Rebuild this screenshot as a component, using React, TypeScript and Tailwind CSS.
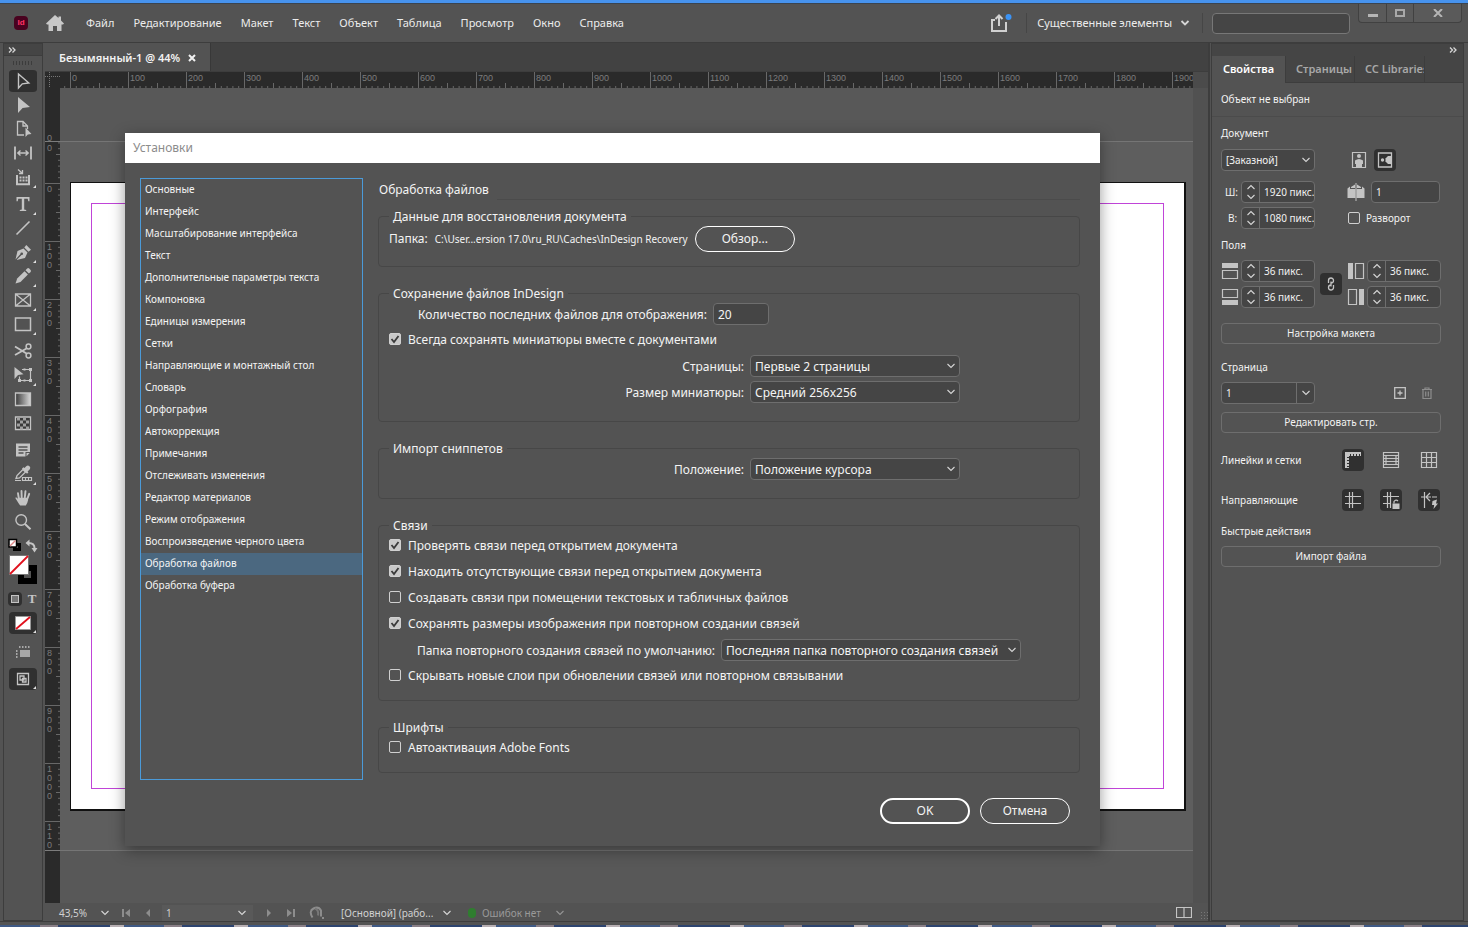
import React from "react";

type IconProps = { children: React.ReactNode; size?: string; box?: string };

function Icon({ children, size = "size-5", box = "0 0 20 20" }: IconProps) {
  return (
    <svg viewBox={box} className={`${size} shrink-0`} fill="none" stroke="#c4c4c4" strokeWidth="1.5" aria-hidden="true">
      {children}
    </svg>
  );
}

function Chevron({ className = "", weight = 1.1 }: { className?: string; weight?: number }) {
  return (
    <svg viewBox="0 0 10 6" className={`h-[6px] w-[10px] shrink-0 ${className}`} fill="none" stroke="#d6d6d6" strokeWidth={weight} aria-hidden="true">
      <path d="M1.500 1L5 4.500 8.500 1" />
    </svg>
  );
}

const F = "#c4c4c4";

const toolGroups: { name: string; more?: boolean; icon: React.ReactNode }[][] = [
  [
    { name: "Выделение", icon: <path d="M5.500 3v14l3.800-4.200 6.500-.8z" strokeWidth="1.400" /> },
    { name: "Прямое выделение", icon: <path d="M5 2v16l4.600-5 7.400-1z" fill={F} stroke="none" /> },
    {
      name: "Страница",
      icon: (
        <>
          <path d="M11 16H4.500V2.500H10l4.500 4.500V10M10 2.500V7h4.500" strokeWidth="1.300" />
          <path d="M12.500 8.500v9.500l2.300-2.500 3.700-.5z" fill={F} stroke="none" />
        </>
      ),
    },
    {
      name: "Зазор",
      icon: (
        <>
          <path d="M2 3.500v13M18 3.500v13" strokeWidth="1.800" />
          <path d="M5 10h10M7.500 7.500L4.800 10l2.700 2.500M12.500 7.500l2.700 2.500-2.700 2.500" strokeWidth="1.400" />
        </>
      ),
    },
    {
      name: "Размещение содержимого",
      more: true,
      icon: (
        <>
          <path d="M4 8v9.200h12V8" strokeWidth="2" />
          <path d="M5 2.500l4 3.500M9.500 3v3.500H6" strokeWidth="1.300" />
          <path d="M6.500 10.500h8M6.500 13.500h8" strokeWidth="2" strokeDasharray="2 1" />
        </>
      ),
    },
  ],
  [
    { name: "Текст", more: true, icon: <path d="M3.500 3h13v4.200h-1.200l-.6-2.400h-3.500v10.700l2 .4V17H6.800v-1.100l2-.4V4.800H5.300l-.6 2.400H3.500z" fill={F} stroke="none" /> },
    { name: "Линия", icon: <path d="M3.500 16.500l13-13" strokeWidth="1.600" /> },
    {
      name: "Перо",
      more: true,
      icon: (
        <>
          <path d="M2.500 17.500l2-8.500 6-2.500 4 4L12 16l-8.500 2 5-5a1.300 1.300 0 1 0-1-1z" fill={F} stroke="none" />
          <path d="M11.300 5.500l2-2.500 4.700 4.700-2.500 2z" fill={F} stroke="none" />
        </>
      ),
    },
    {
      name: "Карандаш",
      more: true,
      icon: (
        <>
          <path d="M2.500 17.500l1.700-5 7.300-7.300 3.400 3.400-7.400 7.300z" fill={F} stroke="none" />
          <path d="M12.500 4.200l1.700-1.700q1-.8 2 0l1.400 1.400q.8 1 0 2l-1.700 1.700z" fill={F} stroke="none" />
        </>
      ),
    },
    { name: "Прямоугольный фрейм", more: true, icon: <path d="M2.500 4h15v12h-15zM2.500 4l15 12M17.500 4l-15 12" strokeWidth="1.300" /> },
    { name: "Прямоугольник", more: true, icon: <path d="M2.500 4h15v12.500h-15z" strokeWidth="1.500" /> },
  ],
  [
    {
      name: "Ножницы",
      icon: (
        <>
          <path d="M2 5.500l11.500 7M2 14l11.500-6.500" strokeWidth="1.900" />
          <circle cx="15.500" cy="5.500" r="2.400" strokeWidth="1.500" />
          <circle cx="15.500" cy="14.500" r="2.400" strokeWidth="1.500" />
        </>
      ),
    },
    {
      name: "Свободное трансформирование",
      more: true,
      icon: (
        <>
          <path d="M9 4.500h8.500v11h-11v-4" strokeWidth="1.200" />
          <path d="M16 3h3v3h-3zM16 14h3v3h-3zM5 14h3v3H5zM10.500 3.500h2v2h-2zM10.500 14.500h2v2h-2z" fill={F} stroke="none" />
          <path d="M1.500 2v12l3.500-4 5.500-.8z" fill={F} stroke="none" />
        </>
      ),
    },
    {
      name: "Градиент",
      icon: (
        <>
          <defs>
            <linearGradient id="tool-gradient">
              <stop offset="0" stopColor="#3a3a3a" />
              <stop offset="1" stopColor="#d8d8d8" />
            </linearGradient>
          </defs>
          <path d="M2.500 4h15v12.500h-15z" fill="url(#tool-gradient)" strokeWidth="1.300" />
        </>
      ),
    },
    {
      name: "Растушевка градиента",
      icon: (
        <>
          <path d="M2.500 4h15v12.500h-15z" fill="#3a3a3a" strokeWidth="1.300" />
          <path d="M4 6h12M4 12h12" stroke="#a0a0a0" strokeWidth="3" strokeDasharray="3 3" />
          <path d="M7 9h9M7 15h9" stroke="#a0a0a0" strokeWidth="3" strokeDasharray="3 3" />
        </>
      ),
    },
  ],
  [
    {
      name: "Примечание",
      icon: (
        <>
          <path d="M3 3.500h14V12h-4.500v4.500H3z" fill={F} stroke="none" />
          <path d="M13.500 13h3.200l-3.200 3.200z" fill={F} stroke="none" />
          <path d="M5.500 7h9M5.500 10h9M5.500 13h5" stroke="#535353" strokeWidth="1.300" />
        </>
      ),
    },
    {
      name: "Пипетка",
      more: true,
      icon: (
        <>
          <path d="M3 14.500l1-3 6-6 2.500 2.500-6 6z" strokeWidth="1.300" />
          <path d="M9 4.500l1.500-1.200 1 .8L13.500 2q1.500-1.200 3 .3t.3 3l-2.200 2.200.8 1-1.400 1.300z" fill={F} stroke="none" />
          <path d="M2 16.500h6M9.500 13.500h9v3h-9zM12.500 13v3.500M15.500 13v3.500" strokeWidth="1.200" />
        </>
      ),
    },
    {
      name: "Рука",
      icon: (
        <>
          <path d="M6 11.500L5 5.300M8.700 9.500L8.500 3M11.800 9.500l.7-6.300M14.300 11l1.900-5.200" strokeWidth="1.900" strokeLinecap="round" />
          <path d="M2.200 9.800q1.400-.8 2.400.6l1.200 1.300.3-2h8.800l.2 2.300q-.6 3.300-2.300 5.500H7.200q-1.700-2-5-7.700z" fill={F} stroke="none" />
        </>
      ),
    },
    {
      name: "Масштаб",
      icon: (
        <>
          <circle cx="8.200" cy="8" r="5.300" strokeWidth="1.400" />
          <path d="M12 12l5.500 5.200" strokeWidth="2" />
        </>
      ),
    },
  ],
];

function Corner() {
  return <span className="absolute right-px bottom-px border-b-[3px] border-l-[3px] border-b-[#e0e0e0] border-l-transparent" />;
}

function Toolbar() {
  return (
    <aside className="flex w-10 shrink-0 flex-col border border-[#3d3d3d]">
      <div className="flex h-3 items-center border-b border-[#3d3d3d] bg-[#454545] pl-1">
        <DoubleArrow />
      </div>
      <div className="flex h-[13px] items-center justify-center">
        <div className="h-1 w-5 bg-[repeating-linear-gradient(90deg,#3c3c3c_0_1px,#535353_1px_3px)]" />
      </div>
      <div className="flex flex-col items-center gap-[3px]">
        {toolGroups.map((group, g) => (
          <div key={g} className="flex flex-col">
            {group.map((tool, i) => (
              <button
                key={tool.name}
                aria-label={tool.name}
                className={`relative flex h-6 w-7 items-center justify-center rounded-sm ${g === 0 && i === 0 ? "bg-[#303030] bg-clip-content py-px" : ""}`}
              >
                <Icon>{tool.icon}</Icon>
                {tool.more && <Corner />}
              </button>
            ))}
          </div>
        ))}
      </div>
      <div className="flex flex-col items-center">
        <div className="mt-0.5 flex h-[19px] w-8 items-center justify-between">
          <Icon size="size-4" box="0 0 16 16">
            <path d="M7.500 6.500h5v5h-5z" stroke="#000" strokeWidth="3" />
            <path d="M2 1.500h7.500V9H2z" fill="#fff" stroke="#000" />
            <path d="M3 8l5.500-5.500" stroke="#d88" />
          </Icon>
          <Icon size="size-4" box="0 0 16 16">
            <path d="M5.500 5q6 0 6 5" strokeWidth="2" />
            <path d="M2.500 5L6.500 1.500v7zM8.500 10h6l-3 4.500z" fill={F} stroke="none" />
          </Icon>
        </div>
        <button aria-label="Заливка и обводка" className="size-[30px]">
          <svg viewBox="0 0 30 30" className="size-[30px]" aria-hidden="true">
            <path d="M13 13h13v13H13z" fill="none" stroke="#000" strokeWidth="6" />
            <path d="M1.500.5h19v19h-19z" fill="#fff" stroke="#777" />
            <path d="M2 19L20 1" stroke="#e0101c" strokeWidth="1.800" />
          </svg>
        </button>
        <div className="mt-1 flex h-5 items-center gap-1">
          <button aria-label="Форматирование контейнера" className="flex h-3.5 w-3.5 items-center justify-center rounded-sm bg-[#303030]">
            <span className="size-2 border border-[#c4c4c4] bg-[#777]" />
          </button>
          <button className="w-3 font-['Liberation_Serif',serif] text-[13px] leading-4 font-bold text-[#c4c4c4]">T</button>
        </div>
        <button aria-label="Применить «Нет»" className="relative mt-[3px] flex h-[22px] w-7 items-center justify-center rounded-sm bg-[#303030]">
          <svg viewBox="0 0 16 14" className="h-[14px] w-4" aria-hidden="true">
            <path d="M.5.5h15v13H.5z" fill="#fff" stroke="#999" />
            <path d="M1 13L15 1" stroke="#e0101c" strokeWidth="1.800" />
          </svg>
          <Corner />
        </button>
        <button aria-label="Панель" className="mt-2 flex h-5 w-7 items-center justify-center">
          <Icon size="size-4" box="0 0 16 16">
            <path d="M5 6h10v7H5z" fill="#a8a8a8" stroke="none" />
            <path d="M4 3h12M1 7h3M1 10h3M1 13h3" stroke="#a8a8a8" strokeWidth="2" strokeDasharray="1.500 1.500" />
          </Icon>
        </button>
        <button aria-label="Режим экрана" className="relative mt-1.5 flex h-[22px] w-7 items-center justify-center rounded-sm bg-[#303030]">
          <Icon size="size-3.5" box="0 0 14 14">
            <path d="M1.500 1.500h11v11h-11zM4 4h4v4H4zM6.500 6.500H10V10H6.500z" strokeWidth="1.300" />
          </Icon>
          <Corner />
        </button>
      </div>
    </aside>
  );
}

function DoubleArrow() {
  return (
    <svg viewBox="0 0 8 6" className="h-[6px] w-2" fill="none" stroke="#d6d6d6" strokeWidth="1.300" aria-hidden="true">
      <path d="M1 .5L3.500 3 1 5.500M4.500.5L7 3 4.500 5.500" />
    </svg>
  );
}

const STEP = 58;

function TopRuler() {
  const marks = Array.from({ length: 20 }, (_, i) => i);
  const ticks = Array.from({ length: 195 }, (_, i) => i - 1);
  return (
    <svg className="h-4 min-w-0 flex-1 bg-[#2a2a2a] font-['Liberation_Sans',sans-serif]" aria-hidden="true">
      {ticks.map((t) => (
        <line key={t} x1={10.5 + t * 5.8} x2={10.5 + t * 5.8} y1={t % 10 === 0 ? 0 : t % 5 === 0 ? 11 : 14} y2="16" stroke="#686868" />
      ))}
      {marks.map((m) => (
        <text key={m} x={12 + m * STEP} y="9" fontSize="9" fill="#7c7c7c">
          {m * 100}
        </text>
      ))}
    </svg>
  );
}

function SideRuler() {
  const marks = Array.from({ length: 12 }, (_, i) => i);
  const ticks = Array.from({ length: 123 }, (_, i) => i - 7);
  return (
    <svg className="w-[15px] shrink-0 self-stretch bg-[#2a2a2a] font-['Liberation_Sans',sans-serif]" aria-hidden="true">
      {ticks
        .filter((t) => t < 116)
        .map((t) => (
          <line key={t} y1={95.5 + t * 5.8} y2={95.5 + t * 5.8} x1={t % 10 === 0 ? 0 : t % 5 === 0 ? 11 : 13} x2="15" stroke="#686868" />
        ))}
      <path d="M0 53.500h15M0 762.500h15" stroke="#7c7c7c" />
      <text x="2" y="53" fontSize="9" fill="#7c7c7c">0</text>
      <text x="2" y="63" fontSize="9" fill="#7c7c7c">0</text>
      {marks.map((m) =>
        String(m * 100).slice(0, m === 11 ? 3 : 4).split("").map((digit, i) => (
          <text key={`${m}-${i}`} x="2" y={104 + m * STEP + i * 9} fontSize="9" fill="#7c7c7c">
            {digit}
          </text>
        ))
      )}
    </svg>
  );
}

function DocumentArea() {
  return (
    <main className="flex min-w-0 flex-1 flex-col border-r-2 border-[#3d3d3d]">
      <div className="flex h-[29px] border-b border-[#3d3d3d] bg-[#424242]">
        <div className="flex items-center gap-2 border-r border-[#383838] bg-[#535353] px-3.5 pt-0.5 text-[11px] font-semibold text-[#f2f2f2]">
          <span>Безымянный-1 @ 44%</span>
          <button aria-label="Закрыть вкладку">
            <svg viewBox="0 0 8 8" className="size-2" stroke="#f2f2f2" strokeWidth="2" aria-hidden="true">
              <path d="M1 1l6 6M7 1L1 7" />
            </svg>
          </button>
        </div>
      </div>
      <div className="flex">
        <svg viewBox="0 0 15 16" className="h-4 w-[15px] bg-[#2a2a2a]" stroke="#777" strokeDasharray="1 1" aria-hidden="true">
          <path d="M4.500 0v16M0 4.500h15" />
        </svg>
        <TopRuler />
        <div className="w-[15px] bg-[#4b4b4b]" />
      </div>
      <div className="flex flex-1">
        <SideRuler />
        <div className="flex min-w-0 flex-1 flex-col bg-[#585858] pt-[53px]">
          <div className="flex h-[710px] border-y border-[#757575] bg-[#5e5e5e] pt-10 pr-[7px] pb-[39px] pl-[10px]">
            <div className="flex-1 border border-r-2 border-b-2 border-[#111] bg-white p-5">
              <div className="h-full border border-[#c044d8]" />
            </div>
          </div>
        </div>
        <div className="w-[15px] bg-[#515151]" />
      </div>
      <footer className="flex h-[18px] items-center pt-0.5 text-[10px] whitespace-nowrap text-[#d0d0d0]">
        <span className="w-[55px] pl-3.5">43,5%</span>
        <Chevron />
        <div className="ml-3 flex items-center gap-3.5">
          <button aria-label="Первая страница">
            <Icon size="size-2" box="0 0 8 8"><path d="M1 0v8" stroke="#a0a0a0" /><path d="M8 0v8L3 4z" fill="#8d8d8d" stroke="none" /></Icon>
          </button>
          <button aria-label="Предыдущая страница">
            <Icon size="size-2" box="0 0 8 8"><path d="M6 0v8L2 4z" fill="#8d8d8d" stroke="none" /></Icon>
          </button>
        </div>
        <div className="ml-2.5 flex h-4 w-[91px] items-center bg-[#595959] pr-1.5">
          <input aria-label="Номер страницы" defaultValue="1" className="w-full min-w-0 bg-transparent pl-1 outline-none" />
          <Chevron />
        </div>
        <div className="ml-3 flex items-center gap-3.5">
          <button aria-label="Следующая страница">
            <Icon size="size-2" box="0 0 8 8"><path d="M2 0v8l4-4z" fill="#8d8d8d" stroke="none" /></Icon>
          </button>
          <button aria-label="Последняя страница">
            <Icon size="size-2" box="0 0 8 8"><path d="M0 0v8l5-4z" fill="#8d8d8d" stroke="none" /><path d="M7 0v8" stroke="#a0a0a0" /></Icon>
          </button>
        </div>
        <button aria-label="Открыть" className="ml-3.5">
          <Icon size="size-4" box="0 0 16 16">
            <path d="M3.500 12.500Q-.5 6 4.500 3.500T12 5.500v6" stroke="#8d8d8d" strokeWidth="2" />
            <path d="M6 3.500q4 1.500 3 7" stroke="#777" strokeWidth="2" />
            <path d="M13 12h2v2h-2z" fill="#8d8d8d" stroke="none" />
          </Icon>
        </button>
        <span className="ml-4 w-[101px]">[Основной] (рабо...</span>
        <Chevron />
        <span className="ml-4 h-[10px] w-2 rounded-full bg-[#2f7d2f]" />
        <span className="ml-1.5 w-[73px] text-[#999]">Ошибок нет</span>
        <Chevron className="opacity-50" />
        <div className="ml-auto flex items-center gap-2">
          <button aria-label="Разделить окно">
            <Icon size="h-3 w-4" box="0 0 16 12"><path d="M.5.500h15v10H.5zM8 .500v10" strokeWidth="1.200" /></Icon>
          </button>
          <div className="size-2 self-end bg-[radial-gradient(#777_1px,transparent_1px)] bg-[size:3px_3px]" />
        </div>
      </footer>
    </main>
  );
}

function Spinner({ id, value, label }: { id: string; value: string; label?: string }) {
  return (
    <div className="flex h-[22px] w-[74px] overflow-hidden rounded-sm border border-[#6e6e6e] bg-[#454545]">
      <div className="flex w-[18px] shrink-0 flex-col items-center justify-center gap-1 border-r border-[#6e6e6e]">
        <button aria-label="Увеличить" className="flex"><Chevron className="rotate-180" /></button>
        <button aria-label="Уменьшить" className="flex"><Chevron /></button>
      </div>
      <input id={id} aria-label={label} defaultValue={value} className="w-full min-w-0 bg-transparent pl-1 outline-none" />
    </div>
  );
}

function MarginIcon({ side }: { side: "top" | "bottom" | "left" | "right" }) {
  const shapes = {
    top: "M1 1h16v5H1z",
    bottom: "M1 12h16v5H1z",
    left: "M1 1h5v16H1z",
    right: "M12 1h5v16h-5z",
  };
  const frames = {
    top: "M1.500 8.500h15v8h-15z",
    bottom: "M1.500 1.500h15v8h-15z",
    left: "M8.500 1.500h8v15h-8z",
    right: "M1.500 1.500h8v15h-8z",
  };
  return (
    <Icon size="size-[18px]" box="0 0 18 18">
      <path d={shapes[side]} fill={F} stroke="none" />
      <path d={frames[side]} strokeWidth="1.200" />
    </Icon>
  );
}

function PanelButton({ children }: { children: React.ReactNode }) {
  return (
    <button className="flex h-[21px] w-full items-center justify-center rounded-sm border border-[#6e6e6e]">
      {children}
    </button>
  );
}

function Toggle({ name, on = false, children }: { name: string; on?: boolean; children: React.ReactNode }) {
  return (
    <button aria-label={name} className={`flex size-[22px] items-center justify-center rounded-sm ${on ? "bg-[#303030]" : ""}`}>
      <Icon size="size-[18px]" box="0 0 18 18">{children}</Icon>
    </button>
  );
}

function PropertiesPanel() {
  return (
    <aside className="mr-1 ml-px flex w-[253px] shrink-0 flex-col border border-[#3d3d3d] text-[10px] text-[#f2f2f2]">
      <div className="flex h-3 items-center justify-end bg-[#454545] pr-1.5">
        <DoubleArrow />
      </div>
      <div className="flex h-[27px] border-b border-[#3d3d3d] bg-[#454545] text-[11px] font-semibold text-[#a8a8a8]">
        <button className="-mb-px w-[73px] bg-[#535353] text-white">Свойства</button>
        <button className="w-[70px] border-x border-[#3d3d3d] pl-2">Страницы</button>
        <button className="w-[70px] overflow-hidden border-r border-[#3d3d3d] pl-[10px] text-left whitespace-nowrap">CC Libraries</button>
      </div>
      <div className="flex h-[34px] items-center border-b border-[#4b4b4b] pl-[9px]">Объект не выбран</div>
      <div className="flex w-[238px] flex-col px-[9px]">
        <h3 className="mt-2 flex h-4 items-center">Документ</h3>
        <div className="mt-2 flex h-[22px] items-center">
          <div className="relative">
            <select aria-label="Формат документа" className="h-[22px] w-[94px] appearance-none rounded-sm border border-[#6e6e6e] bg-[#454545] pl-1">
              <option>[Заказной]</option>
            </select>
            <Chevron className="pointer-events-none absolute top-2 right-1" />
          </div>
          <div className="ml-[33px] flex items-center gap-1">
            <Toggle name="Книжная">
              <path d="M2.500 1.500h13v15h-13z" strokeWidth="1.200" />
              <circle cx="9" cy="5" r="2" fill={F} stroke="none" />
              <path d="M5 9.500Q9 6.500 13 9.500V13h-1v3H6v-3H5z" fill={F} stroke="none" />
            </Toggle>
            <Toggle name="Альбомная" on>
              <path d="M2.500 2h13v14h-13z" strokeWidth="1.300" />
              <circle cx="6.500" cy="9" r="1.700" fill={F} stroke="none" />
              <path d="M15 5h-3l-2.500 2.500v3L12 13h3z" fill={F} stroke="none" />
            </Toggle>
          </div>
        </div>
        <div className="mt-[10px] flex h-[22px] items-center">
          <label htmlFor="doc-w" className="w-5 pl-1">Ш:</label>
          <Spinner id="doc-w" value="1920 пикс." />
          <label htmlFor="doc-pages" className="ml-8 w-6" aria-label="Страницы">
            <Icon size="size-[18px]" box="0 0 18 18">
              <path d="M.5 15V5.500l2.500-2V6l5.500 0v9zM9.500 15V6H15V3.500l2.500 2V15zM4 4l4-2.500V5H4zM10 1.500L14 4v1h-4z" fill={F} stroke="none" />
              <path d="M9 0v18" strokeWidth="1" />
            </Icon>
          </label>
          <input id="doc-pages" defaultValue="1" className="h-[22px] w-[69px] rounded-sm border border-[#6e6e6e] bg-[#454545] px-1 outline-none" />
        </div>
        <div className="mt-1 flex h-[22px] items-center">
          <label htmlFor="doc-h" className="w-5 pl-[7px]">В:</label>
          <Spinner id="doc-h" value="1080 пикс." />
          <input id="spread" type="checkbox" className="ml-[33px] size-3 appearance-none rounded-[2px] border border-[#d0d0d0]" />
          <label htmlFor="spread" className="ml-1.5">Разворот</label>
        </div>
        <h3 className="mt-2 flex h-4 items-center">Поля</h3>
        <div className="mt-[7px] flex items-center">
          <div className="flex flex-col gap-1">
            <div className="flex items-center gap-0.5"><MarginIcon side="top" /><Spinner id="m-top" label="Сверху" value="36 пикс." /></div>
            <div className="flex items-center gap-0.5"><MarginIcon side="bottom" /><Spinner id="m-bottom" label="Снизу" value="36 пикс." /></div>
          </div>
          <button aria-label="Связать поля" className="mx-[5px] flex size-[22px] items-center justify-center rounded-sm bg-[#303030]">
            <Icon size="size-4" box="0 0 16 16">
              <path d="M5.500 7V4.500a2.500 2.500 0 0 1 5 0Q10.500 7 8 7M10.500 9v2.500a2.500 2.500 0 0 1-5 0Q5.500 9 8 9M8 5.500v5" strokeWidth="1.300" />
            </Icon>
          </button>
          <div className="flex flex-col gap-1">
            <div className="flex items-center gap-0.5"><MarginIcon side="left" /><Spinner id="m-left" label="Слева" value="36 пикс." /></div>
            <div className="flex items-center gap-0.5"><MarginIcon side="right" /><Spinner id="m-right" label="Справа" value="36 пикс." /></div>
          </div>
        </div>
        <div className="mt-[15px]"><PanelButton>Настройка макета</PanelButton></div>
        <h3 className="mt-[15px] flex h-4 items-center">Страница</h3>
        <div className="mt-[7px] flex h-[22px] items-center">
          <div className="flex h-[22px] w-[94px] overflow-hidden rounded-sm border border-[#6e6e6e] bg-[#454545]">
            <input aria-label="Страница" defaultValue="1" className="w-full min-w-0 bg-transparent pl-1 outline-none" />
            <button aria-label="Выбрать страницу" className="flex w-[18px] shrink-0 items-center justify-center border-l border-[#6e6e6e]"><Chevron /></button>
          </div>
          <div className="ml-auto flex items-center gap-[15px] pr-2">
            <button aria-label="Создать страницу">
              <Icon size="size-3" box="0 0 12 12"><path d="M.7.7h10.600v10.600H.7zM6 3.500v5M3.500 6h5" strokeWidth="1.300" /></Icon>
            </button>
            <button aria-label="Удалить страницу">
              <Icon size="size-3" box="0 0 12 12"><path d="M1 2.500h10M4 2.500V1h4v1.500M2 2.500v9h8v-9M4.700 4.500v5M7.300 4.500v5" stroke="#8d8d8d" strokeWidth="1.200" /></Icon>
            </button>
          </div>
        </div>
        <div className="mt-2"><PanelButton>Редактировать стр.</PanelButton></div>
        <div className="mt-4 flex h-[22px] items-center">
          <h3 className="w-[121px]">Линейки и сетки</h3>
          <div className="flex gap-4">
            <Toggle name="Линейки" on>
              <path d="M1 1h16v4H5v12H1z" fill={F} stroke="none" />
              <path d="M6 4h10" stroke="#303030" strokeWidth="2" strokeDasharray="1 2" />
              <path d="M4 6v10" stroke="#303030" strokeWidth="2" strokeDasharray="1 2" />
            </Toggle>
            <Toggle name="Базовая сетка">
              <path d="M1.500 1.500h15v15h-15zM1.500 4.500h15M1.500 7.500h15M1.500 10.500h15M1.500 13.500h15M4 4.500v9M14 4.500v9" strokeWidth="1.200" />
            </Toggle>
            <Toggle name="Сетка документа">
              <path d="M1.500 1.500h15v15h-15zM6.500 1.500v15M11.500 1.500v15M1.500 6.500h15M1.500 11.500h15" strokeWidth="1.200" />
            </Toggle>
          </div>
        </div>
        <div className="mt-[18px] flex h-[22px] items-center">
          <h3 className="w-[121px]">Направляющие</h3>
          <div className="flex gap-4">
            <Toggle name="Показать направляющие" on>
              <path d="M1 5.500h16M1 12.500h16M5.500 1v16M8.500 1v16" strokeWidth="1.200" />
            </Toggle>
            <Toggle name="Закрепить направляющие" on>
              <path d="M1 5.500h16M1 12.500h8M5.500 1v16M8.500 1v16" strokeWidth="1.200" />
              <path d="M10.500 12.500h7v5.500h-7z" fill={F} stroke="none" />
              <path d="M12 12.500v-2q2-2.500 4-.5" strokeWidth="1.200" />
            </Toggle>
            <Toggle name="Быстрые направляющие" on>
              <path d="M1 6h3M12 6h5M4.500 1v16M10 2L6 6l4 4M6 6h5" strokeWidth="1.200" />
              <path d="M12.500 10l4.500-1.500-1 4h2L13.500 18l.7-4H12z" fill={F} stroke="none" />
            </Toggle>
          </div>
        </div>
        <h3 className="mt-3 flex h-4 items-center">Быстрые действия</h3>
        <div className="mt-[7px]"><PanelButton>Импорт файла</PanelButton></div>
      </div>
    </aside>
  );
}

const menu = ["Файл", "Редактирование", "Макет", "Текст", "Объект", "Таблица", "Просмотр", "Окно", "Справка"];

function Header() {
  return (
    <header className="flex h-[39px] shrink-0 items-center border-t border-[#3a4450] bg-[#535353] pl-[14px] text-[11px] text-[#ececec]">
      <div className="flex size-[14px] items-center justify-center rounded-sm bg-[#49021f] font-['Liberation_Sans',sans-serif] text-[8px] leading-none font-bold text-[#ff3366]">Id</div>
      <button aria-label="Начальный экран" className="ml-[18px]">
        <svg viewBox="0 0 18 16" className="h-4 w-[18px]" fill="#c8c8c8" aria-hidden="true">
          <path d="M9 0l3.500 3V1.500h2.500V5.500l3 3-1 1H15.500V16h-4.500v-5H7v5H2.500V9.500H1l-1-1z" />
        </svg>
      </button>
      <nav className="ml-[22px] flex gap-[19px]">
        {menu.map((item) => (
          <button key={item}>{item}</button>
        ))}
      </nav>
      <div className="ml-auto flex items-center">
        <button aria-label="Поделиться">
          <svg viewBox="0 0 22 18" className="h-[18px] w-[22px]" fill="none" stroke="#d0d0d0" strokeWidth="2" aria-hidden="true">
            <path d="M5 6H2v11h14V8M9 12V2M5.500 5L9 1.500 12.500 5" />
            <circle cx="18.500" cy="3" r="3" fill="#3b93f5" stroke="none" />
          </svg>
        </button>
        <span className="ml-3.5 h-5 w-px bg-[#464646]" />
        <button className="ml-[10px] flex items-center gap-2">
          Существенные элементы
          <Chevron weight={1.8} />
        </button>
        <span className="ml-3 h-5 w-px bg-[#464646]" />
        <input aria-label="Поиск" className="ml-[9px] h-[21px] w-[138px] rounded-sm border border-[#777] bg-[#454545] px-1 outline-none" />
      </div>
      <div className="mr-[6px] ml-2 flex h-[19px] self-start rounded-b-sm border border-t-0 border-[#414141] bg-[#5a5a5a]">
        <button aria-label="Свернуть" className="flex w-7 items-center justify-center border-r border-[#414141]">
          <span className="mt-1 h-[3px] w-[10px] bg-[#b5b5b5]" />
        </button>
        <button aria-label="Развернуть" className="flex w-[27px] items-center justify-center border-r border-[#414141]">
          <span className="h-2 w-[10px] border-2 border-[#a8a8a8]" />
        </button>
        <button aria-label="Закрыть" className="flex w-[47px] items-center justify-center">
          <svg viewBox="0 0 10 8" className="h-2 w-[10px]" stroke="#b5b5b5" strokeWidth="2" aria-hidden="true">
            <path d="M1 0l8 8M9 0L1 8" />
          </svg>
        </button>
      </div>
    </header>
  );
}

const sections = [
  "Основные", "Интерфейс", "Масштабирование интерфейса", "Текст", "Дополнительные параметры текста", "Компоновка",
  "Единицы измерения", "Сетки", "Направляющие и монтажный стол", "Словарь", "Орфография", "Автокоррекция", "Примечания",
  "Отслеживать изменения", "Редактор материалов", "Режим отображения", "Воспроизведение черного цвета", "Обработка файлов",
  "Обработка буфера",
];

function Group({ title, className, children }: { title: string; className: string; children: React.ReactNode }) {
  return (
    <fieldset className={`rounded-sm border border-[#474747] pl-[10px] ${className}`}>
      <legend className="h-5 px-1 leading-[22px]">{title}</legend>
      {children}
    </fieldset>
  );
}

function Check({ id, checked = false, children }: { id: string; checked?: boolean; children: React.ReactNode }) {
  return (
    <div className="flex h-5 items-center gap-[7px]">
      <span className="relative flex size-3">
        <input
          id={id}
          type="checkbox"
          defaultChecked={checked}
          className="peer size-3 appearance-none rounded-[2px] border border-[#d0d0d0] checked:bg-[#c8c8c8]"
        />
        <svg viewBox="0 0 12 12" className="pointer-events-none absolute inset-0 hidden size-3 peer-checked:block" fill="none" stroke="#3a3a3a" strokeWidth="1.800" aria-hidden="true">
          <path d="M2.500 6l2.500 3 4.500-6" />
        </svg>
      </span>
      <label htmlFor={id} className="pt-0.5">{children}</label>
    </div>
  );
}

function SelectRow({ id, label, value, labelClass, selectClass }: { id: string; label: string; value: string; labelClass: string; selectClass: string }) {
  return (
    <div className="flex h-[22px] items-center gap-1.5">
      <label htmlFor={id} className={`pt-0.5 ${labelClass}`}>{label}</label>
      <div className={`relative ${selectClass}`}>
        <select id={id} className="h-[22px] w-full appearance-none rounded-sm border border-[#6e6e6e] bg-[#454545] pt-0.5 pl-1">
          <option>{value}</option>
        </select>
        <Chevron className="pointer-events-none absolute top-2 right-1" />
      </div>
    </div>
  );
}

function PreferencesDialog() {
  return (
    <div
      role="dialog"
      aria-labelledby="prefs-title"
      className="absolute top-[133px] left-[125px] w-[975px] bg-[#535353] text-[12px] text-[#f4f4f4] shadow-[0_4px_14px_rgba(0,0,0,0.4)]"
    >
      <h1 id="prefs-title" className="flex h-[30px] items-center bg-white pl-2 text-[#8c8c8c]">Установки</h1>
      <div className="flex gap-[15px] pt-[15px] pr-5 pl-[15px]">
        <ul className="h-[602px] w-[223px] shrink-0 border border-[#4b9ad8] text-[10px]">
          {sections.map((name) => (
            <li key={name}>
              <button className={`flex h-[22px] w-full items-center pb-0.5 pl-1 ${name === "Обработка файлов" ? "bg-[#4b6880]" : ""}`}>{name}</button>
            </li>
          ))}
        </ul>
        <div className="flex min-w-0 flex-1 flex-col">
          <h2 className="flex h-[28px] gap-2 pl-px leading-6">
            Обработка файлов
            <span className="mt-[21px] h-px flex-1 bg-[#4b4b4b]" />
          </h2>
          <div className="flex flex-col gap-4">
            <Group title="Данные для восстановления документа" className="pb-3.5">
              <div className="flex h-[26px] items-center">
                <span>Папка:</span>
                <span className="ml-[7px] w-[260px] text-[10px] whitespace-nowrap">C:\User...ersion 17.0\ru_RU\Caches\InDesign Recovery</span>
                <button className="h-[26px] w-[100px] rounded-full border border-white">Обзор...</button>
              </div>
            </Group>
            <Group title="Сохранение файлов InDesign" className="pb-[18px]">
              <div className="flex h-[22px] items-center">
                <label htmlFor="recent" className="w-[318px] pt-0.5 text-right">Количество последних файлов для отображения:</label>
                <input id="recent" defaultValue="20" className="ml-1.5 h-[22px] w-14 rounded-sm border border-[#6e6e6e] bg-[#454545] px-1 outline-none" />
              </div>
              <div className="mt-1 mb-1.5">
                <Check id="thumbs" checked>Всегда сохранять миниатюры вместе с документами</Check>
              </div>
              <div className="flex flex-col gap-1">
                <SelectRow id="pages" label="Страницы:" value="Первые 2 страницы" labelClass="w-[355px] text-right" selectClass="w-[210px]" />
                <SelectRow id="thumb-size" label="Размер миниатюры:" value="Средний 256x256" labelClass="w-[355px] text-right" selectClass="w-[210px]" />
              </div>
            </Group>
            <Group title="Импорт сниппетов" className="pb-[18px]">
              <SelectRow id="position" label="Положение:" value="Положение курсора" labelClass="w-[355px] text-right" selectClass="w-[210px]" />
            </Group>
            <Group title="Связи" className="pb-[15px]">
              <div className="flex flex-col gap-1.5">
                <Check id="link-check" checked>Проверять связи перед открытием документа</Check>
                <Check id="link-find" checked>Находить отсутствующие связи перед открытием документа</Check>
                <Check id="link-create">Создавать связи при помещении текстовых и табличных файлов</Check>
                <Check id="link-size" checked>Сохранять размеры изображения при повторном создании связей</Check>
              </div>
              <div className="mt-1.5 mb-1">
                <SelectRow id="relink" label="Папка повторного создания связей по умолчанию:" value="Последняя папка повторного создания связей" labelClass="w-[326px] text-right whitespace-nowrap" selectClass="w-[300px]" />
              </div>
              <Check id="link-layers">Скрывать новые слои при обновлении связей или повторном связывании</Check>
            </Group>
            <Group title="Шрифты" className="pb-[15px]">
              <Check id="fonts">Автоактивация Adobe Fonts</Check>
            </Group>
          </div>
          <div className="mt-[25px] mb-[22px] flex justify-end gap-[10px] pr-[10px]">
            <button className="h-[26px] w-[90px] rounded-full border-2 border-white">OK</button>
            <button className="h-[26px] w-[90px] rounded-full border border-white">Отмена</button>
          </div>
        </div>
      </div>
    </div>
  );
}

export default function App() {
  return (
    <div className="relative flex min-h-screen w-full flex-col bg-[#535353] font-['Noto_Sans',sans-serif]">
      <div className="h-[3px] bg-[#4793ee]" />
      <Header />
      <div className="flex flex-1 gap-0 border-t border-b border-[#3d3d3d] pl-[3px]">
        <Toolbar />
        <div className="w-0.5 shrink-0" />
        <DocumentArea />
        <PropertiesPanel />
      </div>
      <div className="h-[3px]" />
      <div className="h-0.5 bg-[repeating-linear-gradient(90deg,#3f5a86_0_40px,#8a8088_40px_58px,#2d4470_58px_110px,#b8b0b4_110px_124px)]" />
      <PreferencesDialog />
    </div>
  );
}
